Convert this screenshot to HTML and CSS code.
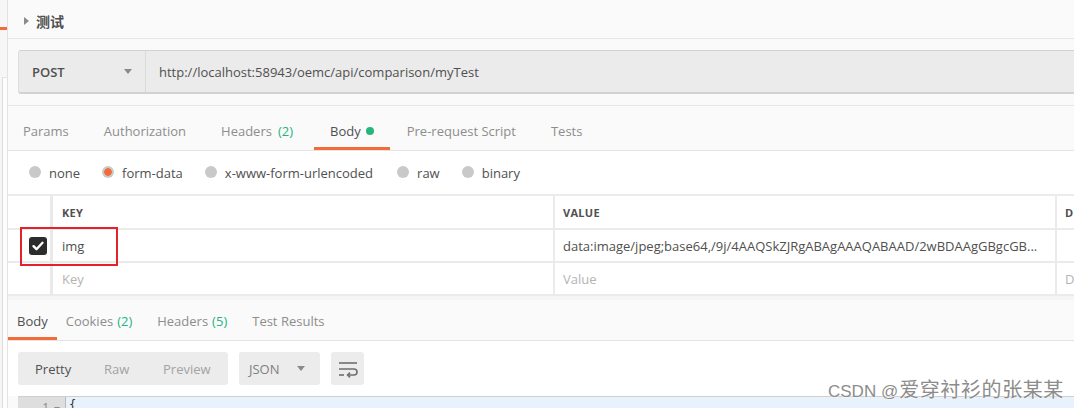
FILE: index.html
```html
<!DOCTYPE html>
<html lang="zh">
<head>
<meta charset="utf-8">
<link rel="stylesheet" href="styles.css">
</head>
<body>
<div class="app">
  <aside class="side">
    <div class="side-top"><span class="side-accent"></span></div>
    <div class="side-bottom"></div>
  </aside>
  <main class="main">
    <header class="title-bar"><span class="caret"></span><span class="title">测试</span></header>
    <section class="url-row">
      <div class="url-box">
        <div class="method"><span>POST</span><span class="dd"></span></div>
        <div class="url">http://localhost:58943/oemc/api/comparison/myTest</div>
      </div>
    </section>
    <nav class="req-tabs">
      <span class="tab">Params</span>
      <span class="tab">Authorization</span>
      <span class="tab">Headers <em>(2)</em></span>
      <span class="tab active">Body <i class="dot"></i></span>
      <span class="tab">Pre-request Script</span>
      <span class="tab">Tests</span>
    </nav>
    <div class="body-modes">
      <label class="mode"><span class="radio"></span>none</label>
      <label class="mode"><span class="radio on"></span>form-data</label>
      <label class="mode"><span class="radio"></span>x-www-form-urlencoded</label>
      <label class="mode"><span class="radio"></span>raw</label>
      <label class="mode"><span class="radio"></span>binary</label>
    </div>
    <div class="kv">
      <div class="row head">
        <div class="c chk"></div>
        <div class="c key">KEY</div>
        <div class="c val">VALUE</div>
        <div class="c desc">DE</div>
      </div>
      <div class="row">
        <div class="c chk"><span class="checkbox"><svg viewBox="0 0 18 18" width="18" height="18"><path d="M4.5 9.2l3 3 6-6.4" fill="none" stroke="#fff" stroke-width="2.4" stroke-linecap="round" stroke-linejoin="round"/></svg></span></div>
        <div class="c key">img</div>
        <div class="c val">data:image/jpeg;base64,/9j/4AAQSkZJRgABAgAAAQABAAD/2wBDAAgGBgcGB...</div>
        <div class="c desc"></div>
      </div>
      <div class="row">
        <div class="c chk"></div>
        <div class="c key ph">Key</div>
        <div class="c val ph">Value</div>
        <div class="c desc ph">D</div>
      </div>
    </div>
    <div class="gap"></div>
    <nav class="res-tabs">
      <span class="rtab active">Body</span>
      <span class="rtab">Cookies <em>(2)</em></span>
      <span class="rtab">Headers <em>(5)</em></span>
      <span class="rtab">Test Results</span>
    </nav>
    <div class="res-tools">
      <div class="seg">
        <span class="seg-item sel">Pretty</span>
        <span class="seg-item">Raw</span>
        <span class="seg-item">Preview</span>
      </div>
      <div class="fmt"><span>JSON</span><span class="dd"></span></div>
      <div class="wrap-btn">
        <svg viewBox="0 0 22 18" width="22" height="18"><g fill="none" stroke="#6e6e6e" stroke-width="1.6"><path d="M2 3h18"/><path d="M2 9h15a3 3 0 0 1 0 6h-6"/><path d="M13 12.6l-2.4 2.4 2.4 2.4"/><path d="M2 15h5"/></g></svg>
      </div>
    </div>
    <div class="editor">
      <div class="gutter"><span class="ln">1</span><span class="fold"></span></div>
      <div class="code">{</div>
    </div>
  </main>
  <div class="annot"></div>
  <div class="watermark">CSDN @<span class="wm-cjk">爱穿衬衫的张某某</span></div>
</div>
</body>
</html>
```

FILE: styles.css
```css
* { box-sizing: border-box; }
html, body { margin: 0; padding: 0; }
body {
  width: 1074px;
  height: 408px;
  overflow: hidden;
  font-family: "Open Sans", "Noto Sans CJK SC", sans-serif;
  font-size: 13px;
  color: #505050;
  background: #fafafa;
}
.app {
  position: relative;
  display: flex;
  width: 1074px;
  height: 408px;
  overflow: hidden;
}

/* left strip */
.side {
  width: 8px;
  flex: none;
  display: flex;
  flex-direction: column;
  border-right: 1px solid #e2e2e2;
  background: #f6f6f6;
}
.side-top {
  height: 77px;
  padding-top: 27px;
}
.side-accent {
  display: block;
  height: 3px;
  width: 7px;
  background: #f26b3a;
}
.side-bottom {
  flex: 1;
  margin-left: 2px;
  border-left: 1px solid #dcdcdc;
  border-top: 1px solid #e4e4e4;
  background: #fdfdfd;
}

.main {
  flex: 1;
  min-width: 0;
  overflow: hidden;
  display: flex;
  flex-direction: column;
  background: #fafafa;
}

/* title */
.title-bar {
  height: 39px;
  flex: none;
  display: flex;
  align-items: center;
  padding-left: 16px;
  padding-top: 3px;
  border-bottom: 1px solid #e6e6e6;
}
.caret {
  width: 0; height: 0;
  border-top: 4px solid transparent;
  border-bottom: 4px solid transparent;
  border-left: 5px solid #8a8a8a;
  margin-right: 7px;
}
.title {
  font-family: "Noto Sans CJK SC", sans-serif;
  font-size: 14px;
  font-weight: 700;
  color: #4f4f4f;
}

/* url row */
.url-row {
  flex: none;
  height: 67px;
  padding: 11px 0 12px 10px;
  border-bottom: 1px solid #e6e6e6;
}
.url-box {
  height: 44px;
  margin-right: -30px;
  display: flex;
  background: #ebebeb;
  border-top: 1px solid #d2d2d2;
  border-bottom: 2px solid #d2d2d2;
  border-left: 1px solid #dedede;
  border-radius: 3px 0 0 3px;
}
.method {
  width: 127px;
  flex: none;
  display: flex;
  align-items: center;
  justify-content: space-between;
  padding: 0 13px 0 13px;
  border-right: 1px solid #dadada;
  font-weight: 600;
  color: #505050;
}
.dd {
  width: 0; height: 0;
  border-left: 4px solid transparent;
  border-right: 4px solid transparent;
  border-top: 5px solid #8a8a8a;
}
.url {
  display: flex;
  align-items: center;
  padding-left: 13px;
  color: #505050;
}

/* request tabs */
.req-tabs {
  flex: none;
  height: 45px;
  display: flex;
  border-bottom: 1px solid #e4e4e4;
  padding-left: 0;
}
.tab {
  display: flex;
  align-items: center;
  padding: 8px 18px 0 17px;
  color: #8d8d8d;
  border-bottom: 3px solid transparent;
  white-space: nowrap;
}
.tab:first-child { padding-left: 15px; }
.tab em, .rtab em {
  font-style: normal;
  color: #26b47f;
  margin-left: 4px;
}
.tab em { margin-left: 6px; }
.tab:nth-child(3) { padding-right: 21px; }
.tab.active {
  color: #505050;
  border-bottom-color: #f26b3a;
  padding-left: 16px;
  padding-right: 16px;
}
.dot {
  display: inline-block;
  width: 8px; height: 8px;
  border-radius: 50%;
  background: #26b47f;
  margin-left: 5px;
}

/* body modes */
.body-modes {
  flex: none;
  height: 43px;
  display: flex;
  align-items: center;
  padding-left: 21px;
  gap: 22px;
  background: #ffffff;
}
.mode {
  display: flex;
  align-items: center;
  color: #505050;
}
.mode:nth-child(4) { margin-left: 2px; }
.radio {
  width: 12px; height: 12px;
  border-radius: 50%;
  background: #c9c9c9;
  margin-right: 8px;
  margin-top: -2px;
}
.radio.on {
  background: radial-gradient(circle, #f26b3a 0 3.5px, #c9c9c9 4px);
}

/* table */
.kv {
  flex: none;
  border-top: 2px solid #ebebeb;
  background: #fff;
}
.row {
  display: grid;
  grid-template-columns: 45px 502px 502px 300px;
  height: 33px;
  border-bottom: 2px solid #ebebeb;
}
.row.head { height: 34px; }
.c {
  display: flex;
  align-items: center;
  padding-left: 8px;
  white-space: nowrap;
  overflow: hidden;
}
.chk {
  border-right: 3px solid #e9e9e9;
  justify-content: flex-end;
  padding-left: 0;
  padding-right: 3px;
}
.key, .val { border-right: 2px solid #ebebeb; }
.head .c {
  font-size: 11px;
  font-weight: 700;
  color: #505050;
  letter-spacing: 0.3px;
}
.c.key { padding-left: 9px; }
.ph { color: #b4b4b4; }
.checkbox {
  width: 18px; height: 18px;
  border-radius: 3px;
  background: #2c2c2c;
  display: flex;
}

.gap {
  flex: none;
  height: 4px;
  background: #f5f5f5;
}

/* response tabs */
.res-tabs {
  flex: none;
  height: 41px;
  display: flex;
  border-bottom: 1px solid #e3e3e3;
  background: #fafafa;
}
.rtab {
  display: flex;
  align-items: center;
  padding: 4px 9px 0 9px;
  margin-right: 7px;
  color: #8d8d8d;
  border-bottom: 3px solid transparent;
  white-space: nowrap;
}
.rtab:first-child { margin-right: 0; }
.rtab.active {
  color: #505050;
  border-bottom-color: #f26b3a;
}

/* response tools */
.res-tools {
  flex: none;
  height: 55px;
  display: flex;
  align-items: flex-start;
  gap: 11px;
  padding: 11px 0 0 10px;
  background: #fff;
}
.seg {
  height: 33px;
  width: 210px;
  display: flex;
  align-items: center;
  background: #ececec;
  border-radius: 3px;
  padding-left: 17px;
}
.seg-item { color: #a3a3a3; }
.seg-item.sel { color: #505050; width: 69px; }
.seg-item:nth-child(2) { width: 59px; }
.fmt {
  height: 33px;
  width: 81px;
  display: flex;
  align-items: center;
  justify-content: space-between;
  padding: 0 15px 0 10px;
  background: #ececec;
  border-radius: 3px;
  color: #808080;
}
.wrap-btn {
  width: 33px;
  height: 33px;
  background: #ececec;
  border-radius: 3px;
  display: flex;
  align-items: center;
  justify-content: center;
}

/* editor */
.editor {
  flex: 1;
  display: flex;
  margin-left: 10px;
  border-top: 1px solid #cfcfcf;
  background: #e8f2fc;
}
.gutter {
  width: 47px;
  flex: none;
  display: flex;
  align-items: flex-start;
  justify-content: flex-end;
  padding: 2px 5px 0 0;
  background: #dedede;
  color: #8a8a8a;
  font-size: 12px;
  gap: 5px;
}
.fold {
  width: 0; height: 0;
  margin-top: 8px;
  border-left: 3px solid transparent;
  border-right: 3px solid transparent;
  border-top: 4px solid #8a8a8a;
}
.code {
  padding: 1px 0 0 3px;
  font-family: "DejaVu Sans Mono", monospace;
  font-size: 12px;
  color: #333;
  border-left: 1px solid #bbb;
}

/* overlays */
.annot {
  position: absolute;
  left: 20px;
  top: 227px;
  width: 98px;
  height: 39px;
  border: 2px solid #e3232b;
}
.watermark {
  position: absolute;
  left: 828px;
  top: 374px;
  font-family: "Liberation Sans", "Noto Sans CJK SC", sans-serif;
  font-size: 17px;
  color: #8c8c8c;
  text-shadow: 0 0 2px #fff, 0 0 1px #fff;
  white-space: nowrap;
}
.wm-cjk {
  font-family: "Noto Sans CJK SC", sans-serif;
  font-size: 20px;
  letter-spacing: 0.6px;
  margin-left: 1px;
}
```
